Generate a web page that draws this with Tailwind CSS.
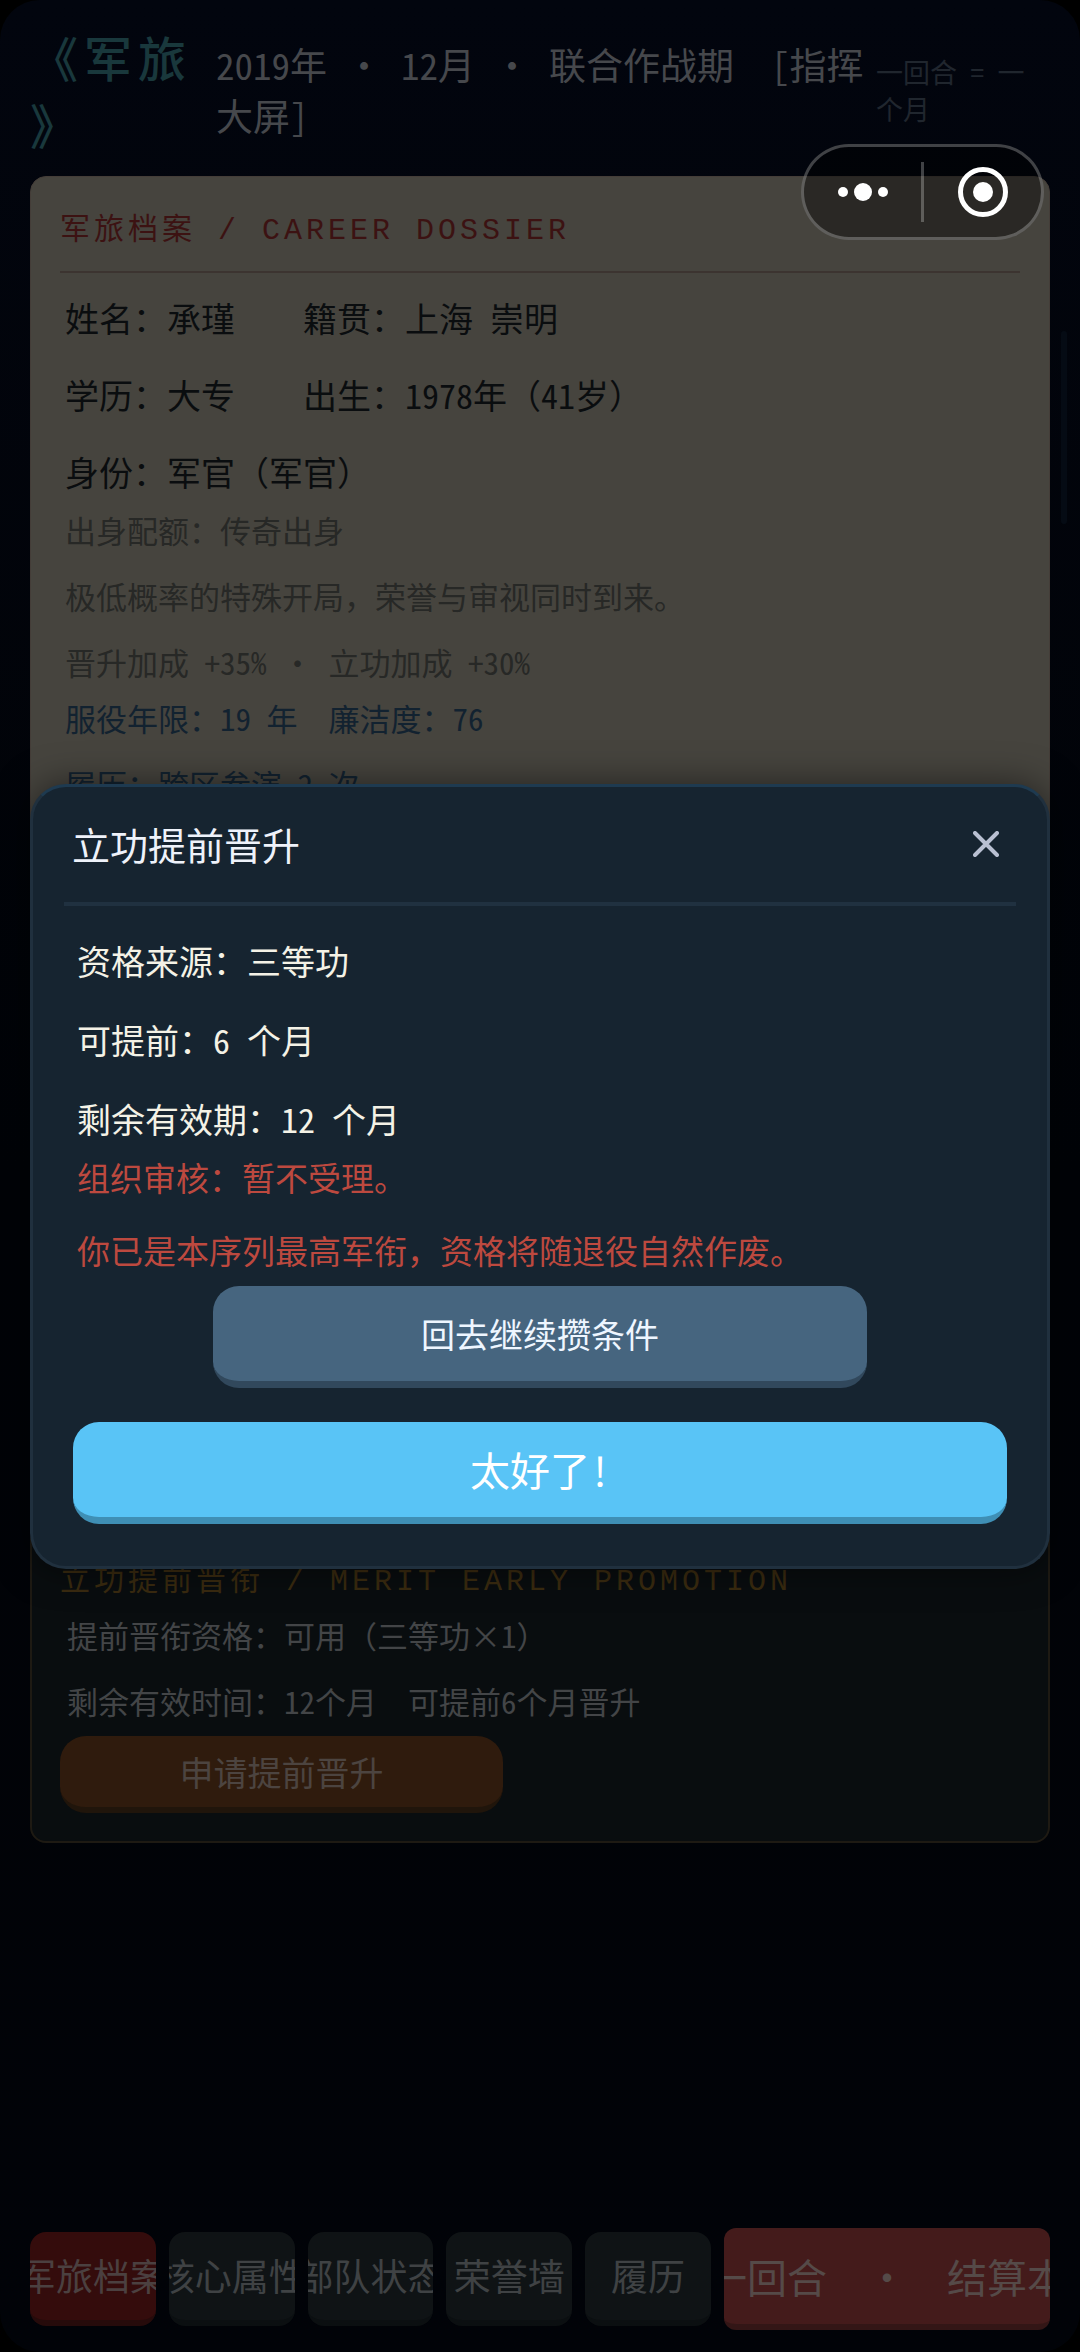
<!DOCTYPE html>
<html lang="zh-CN">
<head>
    <meta charset="UTF-8">
    <meta name="viewport" content="width=device-width, initial-scale=1.0">
    <title>军旅</title>
    <script src="https://cdn.jsdelivr.net/npm/@tailwindcss/browser@4"></script>
</head>
<body class="bg-black font-['Noto_Sans_CJK_SC',sans-serif]">

    <div class="relative flex flex-col min-h-screen px-[30px] py-[22px] rounded-[40px] bg-linear-to-b from-[#02050e] via-[#010307] to-[#010308]">

        <!-- Header -->
        <header class="flex items-center mt-px mb-[19px] [font-feature-settings:'hwid']">
            <h1 class="w-[186px] shrink-0 pr-3 text-[48px] leading-[67px] font-medium tracking-[6px] [line-break:anywhere] text-[#19383c]">《军旅》</h1>
            <p class="flex-1 text-[37px] leading-[51px] text-[#46484c]">2019年 · 12月 · 联合作战期&nbsp; [指挥大屏]</p>
            <p class="w-[174px] shrink-0 text-[27px] leading-[37px] text-[#20262e]">一回合 = 一个月</p>
        </header>

        <!-- Career dossier -->
        <section class="px-[29px] pt-[31px] pb-[30px] rounded-t-2xl border border-[#443d38] bg-[#46443e]">
            <h2 class="pb-[17px] border-b-2 border-[#3c3430] font-['Liberation_Mono','Noto_Sans_CJK_SC',monospace] text-[30px] leading-[46px] tracking-[4px] text-[#3c1212]">军旅档案 / CAREER DOSSIER</h2>
            <div class="flex flex-col gap-[31px] px-[5px] mt-[22px] text-[34px] leading-[46px] text-[#0a0d0f]">
                <p class="flex gap-[68px]">
                    <span>姓名：承瑾</span>
                    <span class="[font-feature-settings:'hwid']">籍贯：上海 崇明</span>
                </p>
                <p class="flex gap-[68px]">
                    <span>学历：大专</span>
                    <span>出生：<span class="[font-feature-settings:'hwid']">1978</span>年（<span class="[font-feature-settings:'hwid']">41</span>岁）</span>
                </p>
                <p>身份：军官（军官）</p>
            </div>
            <div class="flex flex-col gap-[26px] px-[5px] mt-[15px] text-[31px] leading-10 text-[#272826]">
                <p>出身配额：传奇出身</p>
                <p>极低概率的特殊开局，荣誉与审视同时到来。</p>
                <p class="[font-feature-settings:'hwid']">晋升加成 +35% · 立功加成 +30%</p>
            </div>
            <div class="flex flex-col gap-[26px] px-[5px] mt-4 text-[31px] leading-10 text-[#122230] [font-feature-settings:'hwid']">
                <p class="flex gap-[31px]">
                    <span>服役年限：19 年</span>
                    <span>廉洁度：76</span>
                </p>
                <p>履历：跨区参演 2 次</p>
            </div>
        </section>

        <!-- Merit early promotion -->
        <section class="mt-[690px] px-7 pt-8 pb-7 rounded-2xl border-2 border-[#1e1a13] bg-[#090d0f]">
            <h2 class="font-['Liberation_Mono','Noto_Sans_CJK_SC',monospace] text-[30px] leading-[46px] tracking-[4px] text-[#3a2b10]">立功提前晋衔 / MERIT EARLY PROMOTION</h2>
            <div class="flex flex-col gap-[26px] px-[7px] mt-[10px] text-[31px] leading-10 text-[#434547]">
                <p>提前晋衔资格：可用（三等功<span class="[font-feature-settings:'hwid']">×1</span>）</p>
                <p class="flex gap-[31px] [font-feature-settings:'hwid']">
                    <span>剩余有效时间：12个月</span>
                    <span>可提前6个月晋升</span>
                </p>
            </div>
            <button class="w-[443px] h-[77px] mt-[15px] rounded-[26px] border-b-[6px] border-[#20150b] bg-[#2f1b0d] text-[34px] text-[#4c4440]">申请提前晋升</button>
        </section>

        <!-- Bottom tabs -->
        <nav class="flex items-center gap-[13px] mt-auto text-[37px] text-[#3f4244]">
            <div class="grid grid-cols-5 gap-[13px] flex-[681]">
                <button class="flex items-center justify-center h-[94px] overflow-hidden whitespace-nowrap rounded-2xl border-b-[6px] border-[#260b0b] bg-[#340c0c] text-[#4b4040]">军旅档案</button>
                <button class="flex items-center justify-center h-[94px] overflow-hidden whitespace-nowrap rounded-2xl border-b-[6px] border-[#0b0f11] bg-[#0f1315]">核心属性</button>
                <button class="flex items-center justify-center h-[94px] overflow-hidden whitespace-nowrap rounded-2xl border-b-[6px] border-[#0b0f11] bg-[#0f1315]">部队状态</button>
                <button class="flex items-center justify-center h-[94px] overflow-hidden whitespace-nowrap rounded-2xl border-b-[6px] border-[#0b0f11] bg-[#0f1315]">荣誉墙</button>
                <button class="flex items-center justify-center h-[94px] overflow-hidden whitespace-nowrap rounded-2xl border-b-[6px] border-[#0b0f11] bg-[#0f1315]">履历</button>
            </div>
            <button class="flex flex-[326] items-center justify-center min-w-0 h-[102px] overflow-hidden whitespace-nowrap rounded-xl border-b-[6px] border-[#331616] bg-[#441b1b] text-[40px] text-[#554a48]">一回合　·　结算本</button>
        </nav>

        <!-- Scroll thumb -->
        <div class="absolute right-[13px] top-[331px] w-[6px] h-[193px] rounded-full bg-[#050b14]"></div>
    </div>

    <!-- Dialog -->
    <div class="absolute inset-0 flex items-center px-[30px]">
        <div role="dialog" aria-labelledby="dialog-title" class="w-full px-[31px] pt-[29px] pb-[42px] rounded-[36px] border-3 border-[#20303e] border-t-[#1e3a50] bg-[#162430] shadow-[0_0_36px_rgba(0,0,0,0.5)]">
            <div class="flex items-center justify-between pl-2 pr-[17px] pb-[30px] border-b-4 border-[#203140]">
                <h2 id="dialog-title" class="text-[38px] leading-[56px] text-[#eef2fa]">立功提前晋升</h2>
                <button aria-label="关闭">
                    <svg class="w-[26px] h-[26px]" viewBox="0 0 26 26" fill="none" stroke="#b9c0d2" stroke-width="4" stroke-linecap="round">
                        <path d="M2 2 24 24M24 2 2 24"/>
                    </svg>
                </button>
            </div>
            <div class="flex flex-col gap-[33px] px-[13px] mt-8 text-[34px] leading-[46px] text-[#f4f2e6] [font-feature-settings:'hwid']">
                <p>资格来源：三等功</p>
                <p>可提前：6 个月</p>
                <p>剩余有效期：12 个月</p>
            </div>
            <div class="flex flex-col gap-[27px] px-[13px] mt-3 text-[33px] leading-[46px] text-[#bd493f]">
                <p>组织审核：暂不受理。</p>
                <p>你已是本序列最高军衔，资格将随退役自然作废。</p>
            </div>
            <div class="flex flex-col items-center gap-[34px] px-[9px] mt-[13px]">
                <button class="w-[70%] h-[102px] rounded-[26px] border-b-[7px] border-[#31485c] bg-[#46657f] text-[34px] text-[#eef6ff]">回去继续攒条件</button>
                <button class="w-full h-[102px] rounded-[26px] border-b-[7px] border-[#3f8fb5] bg-[#59c4f6] text-[40px] text-white [font-feature-settings:'hwid']">太好了!</button>
            </div>
        </div>
    </div>

    <!-- Capsule menu -->
    <div class="absolute top-36 right-9 flex items-center w-[243px] h-24 rounded-full border-3 border-white/25 bg-black/40">
        <button class="flex flex-1 justify-center" aria-label="更多">
            <svg class="w-[50px] h-5" viewBox="0 0 50 20" fill="#fff">
                <circle cx="5" cy="10" r="5"/>
                <circle cx="25" cy="10" r="9"/>
                <circle cx="45" cy="10" r="5"/>
            </svg>
        </button>
        <div class="w-[3px] h-[60px] bg-white/25"></div>
        <button class="flex flex-1 justify-center" aria-label="退出">
            <svg class="w-[50px] h-[50px]" viewBox="0 0 50 50">
                <circle cx="25" cy="25" r="22.5" fill="none" stroke="#fff" stroke-width="5"/>
                <circle cx="25" cy="25" r="10" fill="#fff"/>
            </svg>
        </button>
    </div>

</body>
</html>
